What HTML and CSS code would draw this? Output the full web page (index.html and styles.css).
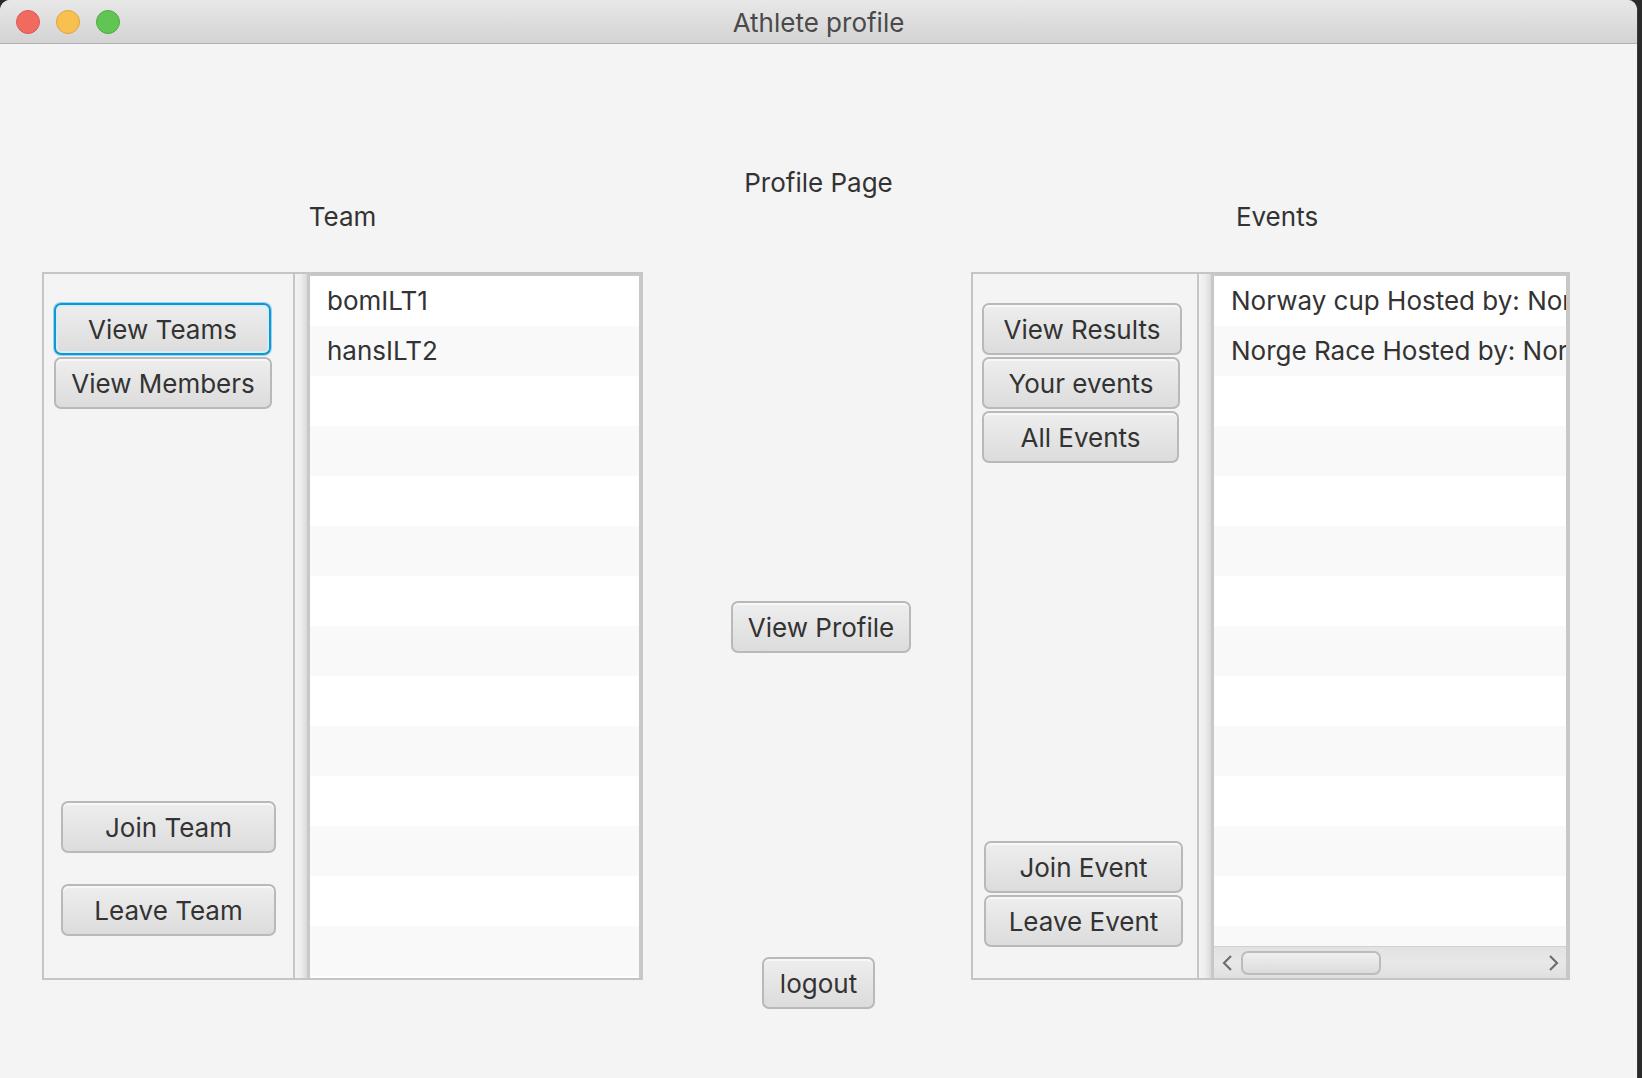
FILE: index.html
```html
<!DOCTYPE html>
<html lang="en">
<head>
<meta charset="utf-8">
<title>Athlete profile</title>
<link rel="stylesheet" href="styles.css">
</head>
<body>
<div class="window">
  <div class="titlebar">
    <div class="lights">
      <span class="light red"></span>
      <span class="light yellow"></span>
      <span class="light green"></span>
    </div>
    <div class="title">Athlete profile</div>
    <div></div>
  </div>
  <div class="content">
    <div class="page-title">Profile Page</div>
    <div class="labels">
      <div class="label label-team">Team</div>
      <div></div>
      <div class="label label-events">Events</div>
    </div>
    <div class="main">
      <div class="split split-team">
        <div class="pane pane-team">
          <div class="btn-group">
            <button class="btn focused w-teams">View Teams</button>
            <button class="btn w-members">View Members</button>
          </div>
          <div class="btn-group team-bottom">
            <button class="btn w-team-action">Join Team</button>
            <button class="btn w-team-action">Leave Team</button>
          </div>
        </div>
        <div class="divider"></div>
        <div class="list">
          <div class="rows">
            <div class="row">bomILT1</div>
            <div class="row">hansILT2</div>
          </div>
        </div>
      </div>

      <div class="center">
        <button class="btn w-profile">View Profile</button>
        <button class="btn w-logout">logout</button>
      </div>

      <div class="split split-events">
        <div class="pane pane-events">
          <div class="btn-group">
            <button class="btn w-results">View Results</button>
            <button class="btn w-your">Your events</button>
            <button class="btn w-all">All Events</button>
          </div>
          <div class="btn-group events-bottom">
            <button class="btn w-event-action">Join Event</button>
            <button class="btn w-event-action">Leave Event</button>
          </div>
        </div>
        <div class="divider"></div>
        <div class="list list-events">
          <div class="rows">
            <div class="row">Norway cup Hosted by: Nor</div>
            <div class="row">Norge Race Hosted by: Nor</div>
          </div>
          <div class="hscroll">
            <div class="arrow arrow-left">
              <svg width="12" height="18" viewBox="0 0 12 18"><polyline points="10,2 3,9 10,16" fill="none" stroke="#6e6e6e" stroke-width="2.2"/></svg>
            </div>
            <div class="thumb"></div>
            <div class="track-space"></div>
            <div class="arrow arrow-right">
              <svg width="12" height="18" viewBox="0 0 12 18"><polyline points="2,2 9,9 2,16" fill="none" stroke="#6e6e6e" stroke-width="2.2"/></svg>
            </div>
          </div>
        </div>
      </div>
    </div>
  </div>
</div>
</body>
</html>
```

FILE: styles.css
```css
html, body {
  margin: 0;
  padding: 0;
}
body {
  width: 1642px;
  height: 1078px;
  background: #2a2a2a;
  overflow: hidden;
  font-family: "Inter", "Liberation Sans", sans-serif;
  color: #333333;
}
.window {
  width: 1638px;
  height: 1078px;
  background: #f4f4f4;
  border-radius: 10px 10px 0 0;
  overflow: hidden;
  border-right: 1px solid #3a3a3a;
  box-sizing: border-box;
}
.titlebar {
  height: 44px;
  box-sizing: border-box;
  border-bottom: 1px solid #b1b1b1;
  background: linear-gradient(#e9e8e9, #d4d3d4);
  display: grid;
  grid-template-columns: 1fr auto 1fr;
  align-items: center;
}
.lights {
  display: flex;
  gap: 16px;
  padding-left: 16px;
}
.light {
  width: 24px;
  height: 24px;
  border-radius: 50%;
  box-sizing: border-box;
}
.red { background: #ef6b60; border: 1px solid #db5a4f; }
.yellow { background: #f7c04f; border: 1px solid #dba540; }
.green { background: #61c554; border: 1px solid #4fab44; }
.title {
  font-size: 26px;
  color: #4a4a4a;
  padding-top: 1px;
}
.content {
  padding: 124px 0 0 42px;
}
.page-title {
  font-size: 26px;
  line-height: 30px;
  height: 30px;
  text-align: center;
  width: 1553px;
}
.labels {
  display: grid;
  grid-template-columns: 601px 328px 599px;
  margin-top: 4px;
  height: 30px;
  font-size: 26px;
  line-height: 30px;
}
.label-team { text-align: center; }
.label-events { text-align: center; padding-left: 13px; }
.main {
  margin-top: 40px;
  display: grid;
  grid-template-columns: 601px 328px 599px;
  align-items: start;
}
.split {
  display: flex;
  height: 708px;
  border-style: solid;
  border-color: #c5c5c5;
  border-width: 2px 0 2px 2px;
  box-sizing: border-box;
  background: #f4f4f4;
}
.pane {
  display: flex;
  flex-direction: column;
  justify-content: space-between;
  padding-top: 29px;
  box-sizing: border-box;
}
.pane-team { width: 249px; padding-bottom: 42px; }
.pane-events { width: 224px; padding-bottom: 31px; }
.btn-group {
  display: flex;
  flex-direction: column;
  gap: 2px;
}
.pane-team .btn-group { padding-left: 10px; }
.pane-team .team-bottom { padding-left: 17px; gap: 31px; }
.pane-events .btn-group { padding-left: 9px; }
.pane-events .events-bottom { padding-left: 11px; }
.divider {
  width: 14px;
  flex: none;
  box-sizing: border-box;
  border-left: 2px solid #c6c6c6;
  background: linear-gradient(to right, #f3f3f3, #eeeeee 50%, #dadada);
}
.list {
  flex: 1;
  border-style: solid;
  border-color: #c8c8c8;
  border-width: 2px 4px 0 3px;
  background: repeating-linear-gradient(#ffffff 0 50px, #f9f9f9 50px 100px);
  overflow: hidden;
  display: flex;
  flex-direction: column;
}
.rows {
  flex: 1;
  overflow: hidden;
}
.row {
  height: 50px;
  line-height: 50px;
  padding-left: 17px;
  font-size: 26px;
  white-space: nowrap;
  overflow: hidden;
}
.hscroll {
  height: 32px;
  flex: none;
  box-sizing: border-box;
  border-top: 1px solid #d2d2d2;
  background: linear-gradient(#e2e2e2, #e8e8e8 50%, #e0e0e0);
  display: flex;
  align-items: center;
}
.arrow {
  width: 27px;
  height: 30px;
  display: flex;
  align-items: center;
  justify-content: center;
}
.arrow-left { padding-right: 2px; box-sizing: border-box; }
.arrow-right { width: 27px; padding-left: 2px; box-sizing: border-box; }
.thumb {
  width: 140px;
  height: 24px;
  box-sizing: border-box;
  border: 2px solid #bcbcbc;
  border-radius: 7px;
  background: linear-gradient(#efefef, #dcdcdc);
}
.track-space { flex: 1; }
.btn {
  display: block;
  height: 52px;
  box-sizing: border-box;
  border: 2px solid #b9b9b9;
  border-radius: 7px;
  background: linear-gradient(#eeeeee, #dcdcdc);
  box-shadow: inset 0 2px 0 #f7f7f7;
  font-family: "Inter", "Liberation Sans", sans-serif;
  font-size: 26px;
  color: #333333;
  padding: 0;
  text-align: center;
}
.btn.focused {
  border-color: #0b98d3;
  box-shadow: 0 0 0 1px #9fd3ec, inset 0 0 0 2px #d9ecf5;
}
.w-teams { width: 217px; }
.w-members { width: 218px; }
.w-team-action { width: 215px; }
.w-results { width: 200px; }
.w-your { width: 198px; }
.w-all { width: 197px; }
.w-event-action { width: 199px; }
.center {
  height: 738px;
  display: flex;
  flex-direction: column;
  align-items: center;
  padding: 329px 0 1px 28px;
  box-sizing: border-box;
}
.w-profile { width: 180px; }
.w-logout { width: 113px; margin-top: auto; margin-right: 5px; }
```
